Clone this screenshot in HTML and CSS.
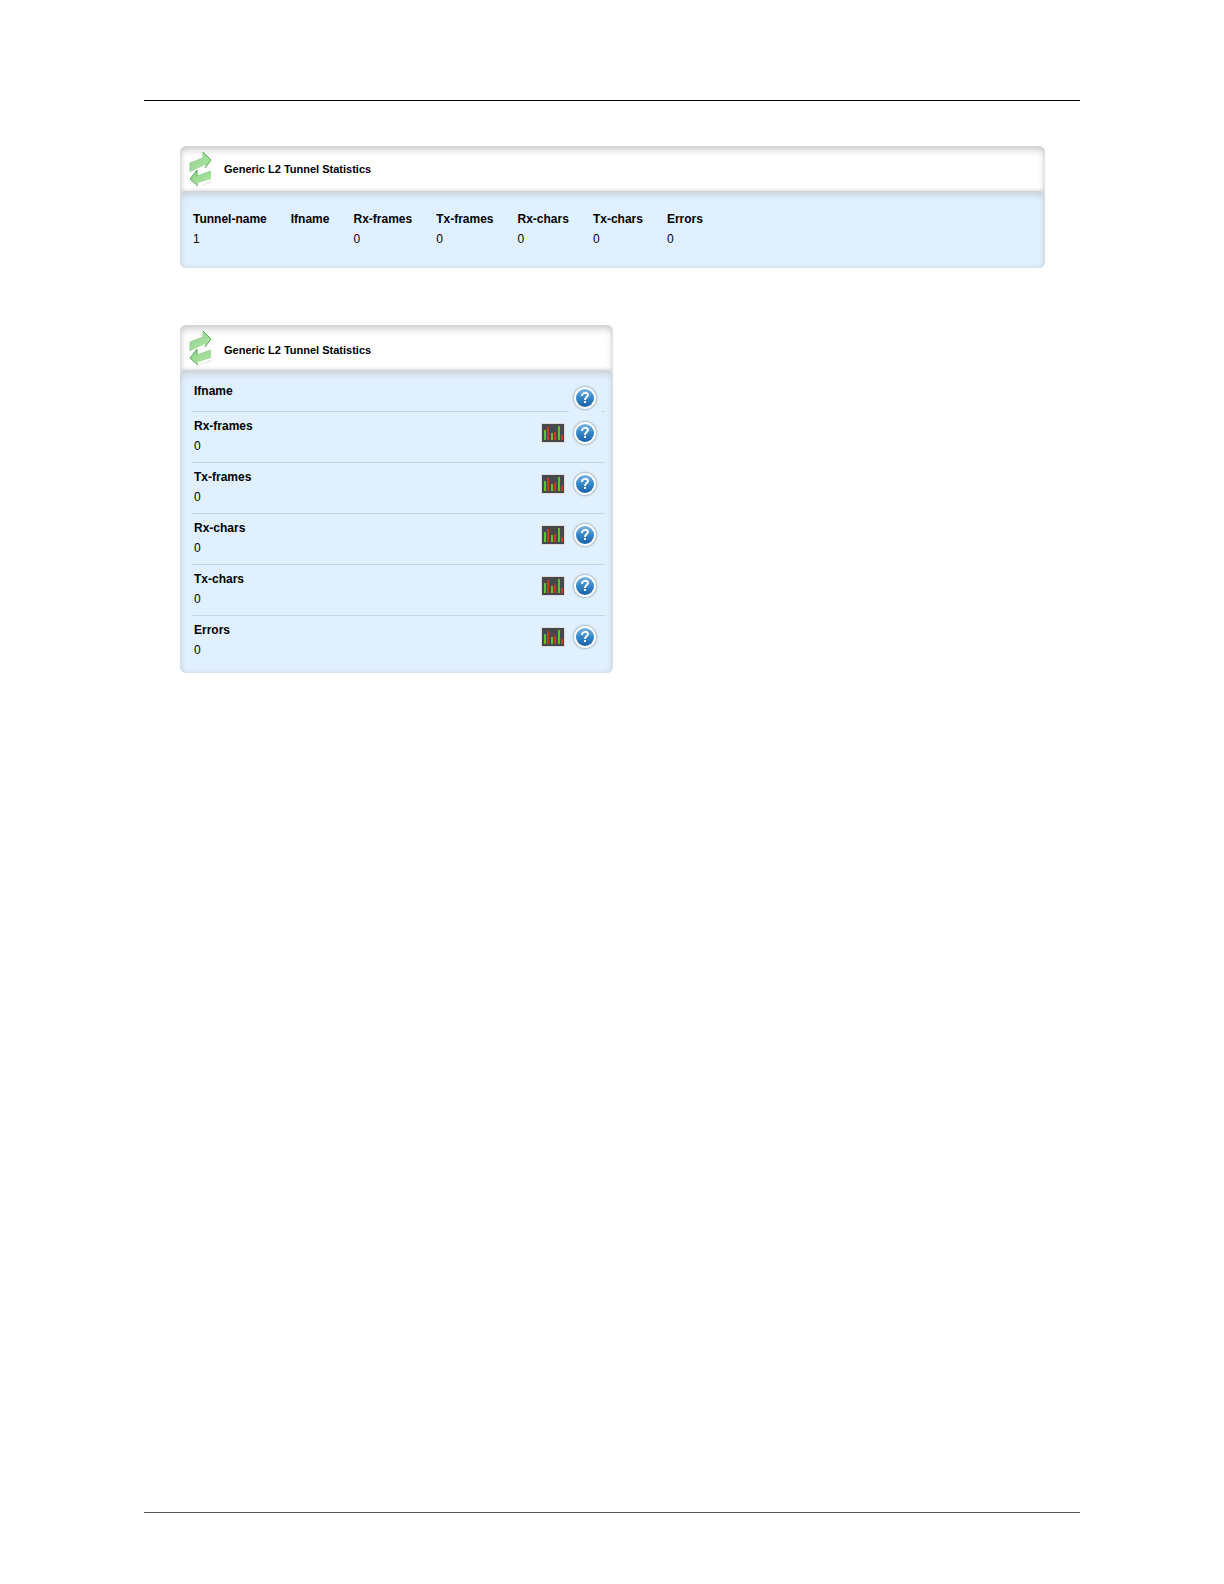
FILE: index.html
```html
<!DOCTYPE html>
<html lang="en">
  <head>
    <meta charset="UTF-8" />
    <title>Generic L2 Tunnel Statistics</title>
    <link rel="stylesheet" href="styles.css">
  </head>
  <body>
    <!-- shared icons -->
    <svg class="sprite" aria-hidden="true">
      <defs>
        <linearGradient id="blue" x1="0" y1="0" x2="0" y2="1">
          <stop offset="0" stop-color="#76b4e4" />
          <stop offset="0.5" stop-color="#3486c8" />
          <stop offset="1" stop-color="#1762ab" />
        </linearGradient>
        <linearGradient id="green" x1="0" y1="0" x2="1" y2="1">
          <stop offset="0" stop-color="#8ed48b" />
          <stop offset="1" stop-color="#b2e3a6" />
        </linearGradient>
      </defs>
      <symbol id="arrows" viewBox="0 0 24 38">
        <path d="M9 37L21 31L23 32L12 36Z" fill="#e4ebe2" />
        <path d="M1 13L14 8V2L22 10L16 18V15L1 22Z" fill="url(#green)" />
        <path d="M22 21V29L9 33V36L1 29L8 20V26Z" fill="url(#green)" />
        <path d="M1 22V13L14 8V2M8 26L22 21" fill="none" stroke="#98d392" />
        <path d="M14 2L22 10L16 18M8 26V20L1 29L9 36" fill="none" stroke="#57a755" />
      </symbol>
      <symbol id="chart" viewBox="0 0 24 20">
        <rect width="24" height="20" fill="#e1d8d8" />
        <rect x="1" y="1" width="22" height="18" fill="#47484c" />
        <path d="M4 17V7M11 17V10M18 17V3" stroke="#62c026" stroke-width="2" />
        <path d="M7 17V4M14 17V9M21 17V12" stroke="#c93b21" stroke-width="2" />
      </symbol>
      <symbol id="help" viewBox="0 0 28 28">
        <circle cx="14" cy="14" r="13" fill="#d3e2ef" />
        <circle cx="14" cy="14" r="12" fill="#b5c6d4" />
        <circle cx="14" cy="14" r="11" fill="#fff" />
        <circle cx="14" cy="14" r="9" fill="url(#blue)" />
        <path d="M11 12C11 8 17 8 17 11C17 13 14 13 14 16" fill="none" stroke="#fff" stroke-width="2" />
        <rect x="13" y="17" width="2" height="2" fill="#fff" />
      </symbol>
    </svg>

    <div class="page">
      <hr class="rule" />

      <main class="content">
        <!-- tunnel list -->
        <section class="panel">
          <header class="panel-header">
            <svg class="panel-icon" aria-hidden="true"><use href="#arrows" /></svg>
            <h2>Generic L2 Tunnel Statistics</h2>
          </header>
          <div class="panel-body">
            <table class="stats-table">
              <thead>
                <tr>
                  <th>Tunnel-name</th>
                  <th>Ifname</th>
                  <th>Rx-frames</th>
                  <th>Tx-frames</th>
                  <th>Rx-chars</th>
                  <th>Tx-chars</th>
                  <th>Errors</th>
                </tr>
              </thead>
              <tbody>
                <tr>
                  <td>1</td>
                  <td></td>
                  <td>0</td>
                  <td>0</td>
                  <td>0</td>
                  <td>0</td>
                  <td>0</td>
                </tr>
              </tbody>
            </table>
          </div>
        </section>

        <!-- tunnel details -->
        <section class="panel panel-half">
          <header class="panel-header">
            <svg class="panel-icon" aria-hidden="true"><use href="#arrows" /></svg>
            <h2>Generic L2 Tunnel Statistics</h2>
          </header>
          <div class="panel-body">
            <div class="row row-empty">
              <div class="field"><h3>Ifname</h3></div>
              <button class="help" aria-label="Help for Ifname"><svg><use href="#help" /></svg></button>
            </div>
            <div class="row">
              <div class="field"><h3>Rx-frames</h3><p>0</p></div>
              <button class="chart" aria-label="Chart of Rx-frames"><svg><use href="#chart" /></svg></button>
              <button class="help" aria-label="Help for Rx-frames"><svg><use href="#help" /></svg></button>
            </div>
            <div class="row">
              <div class="field"><h3>Tx-frames</h3><p>0</p></div>
              <button class="chart" aria-label="Chart of Tx-frames"><svg><use href="#chart" /></svg></button>
              <button class="help" aria-label="Help for Tx-frames"><svg><use href="#help" /></svg></button>
            </div>
            <div class="row">
              <div class="field"><h3>Rx-chars</h3><p>0</p></div>
              <button class="chart" aria-label="Chart of Rx-chars"><svg><use href="#chart" /></svg></button>
              <button class="help" aria-label="Help for Rx-chars"><svg><use href="#help" /></svg></button>
            </div>
            <div class="row">
              <div class="field"><h3>Tx-chars</h3><p>0</p></div>
              <button class="chart" aria-label="Chart of Tx-chars"><svg><use href="#chart" /></svg></button>
              <button class="help" aria-label="Help for Tx-chars"><svg><use href="#help" /></svg></button>
            </div>
            <div class="row">
              <div class="field"><h3>Errors</h3><p>0</p></div>
              <button class="chart" aria-label="Chart of Errors"><svg><use href="#chart" /></svg></button>
              <button class="help" aria-label="Help for Errors"><svg><use href="#help" /></svg></button>
            </div>
          </div>
        </section>
      </main>

      <hr class="rule rule-bottom" />
    </div>
  </body>
</html>
```

FILE: styles.css
```css
body {
  margin: 0;
  background: #fff;
  color: #000;
  font-family: "Liberation Sans", Arial, sans-serif;
  font-size: 12px;
  line-height: 20px;
}

h2,
h3,
p {
  margin: 0;
}

h2 {
  font-size: 11px;
}

h3,
th {
  font-size: 12px;
  font-weight: bold;
}

.sprite {
  position: absolute;
  width: 0;
  height: 0;
}

.page {
  box-sizing: border-box;
  min-height: 100vh;
  padding: 100px 144px 71px;
  display: flex;
  flex-direction: column;
}

.rule {
  width: 100%;
  height: 1px;
  margin: 0;
  border: none;
  background: #000;
}

.rule-bottom {
  background: #58585a;
}

.content {
  flex: 1;
  padding: 45px 35px 45px 36px;
}

.panel {
  margin-bottom: 57px;
  border-radius: 6px;
  background: #dfe2e4;
  overflow: hidden;
}

.panel-half {
  width: 50%;
}

.panel-header {
  display: flex;
  align-items: center;
  gap: 11px;
  height: 45px;
  padding-left: 9px;
  background: #fff;
  border-radius: 6px 6px 0 0;
  box-shadow: inset 0 4px 7px #cfcfcf, inset 0 0 4px #d4d4d4;
}

.panel-icon {
  width: 24px;
  height: 38px;
}

.panel-half .panel-header h2 {
  padding-top: 5px;
}

.panel-body {
  padding: 18px 13px 19px;
  background: #e0f0fe;
  border-radius: 6px;
  box-shadow: inset 0 4px 7px #cbd3d8, inset 0 0 4px #cdd6dc;
}

.panel-half .panel-body {
  padding: 7px 8px 7px 12px;
}

.stats-table {
  border-collapse: collapse;
}

.stats-table th,
.stats-table td {
  padding: 0 24px 0 0;
  text-align: left;
}

.row {
  display: flex;
  align-items: flex-start;
  border-bottom: 1px solid #c5d5e2;
}

.row:last-child {
  border-bottom: none;
}

.field {
  flex: 1;
  padding: 4px 2px 6px;
}

.row-empty .field {
  padding-bottom: 10px;
}

button {
  padding: 0;
  border: none;
  background: #e0f0fe;
  cursor: pointer;
}

button svg {
  display: block;
}

.chart {
  margin-top: 11px;
}

.chart svg {
  width: 24px;
  height: 20px;
}

.help {
  margin: 7px 4px 0;
}

.help svg {
  width: 32px;
  height: 28px;
}

.row-empty .help {
  margin-bottom: -1px;
}
```
